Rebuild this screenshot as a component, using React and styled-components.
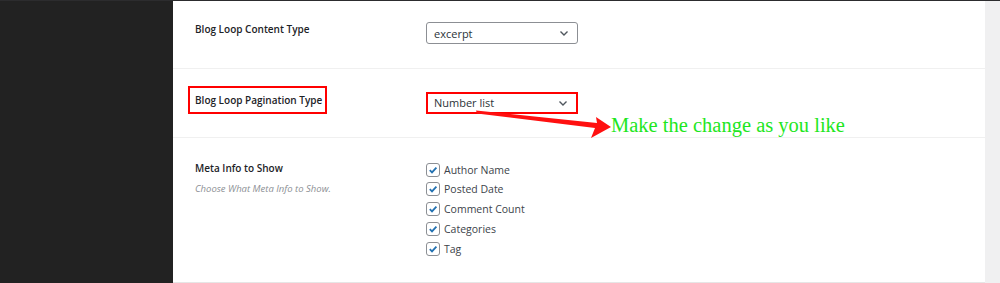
import React from "react";
import styled, { createGlobalStyle } from "styled-components";

const Global = createGlobalStyle`
  html, body { margin: 0; padding: 0; background: #f0f0f1; }
  body { font-family: "Open Sans", "Noto Sans", sans-serif; }
`;

const Page = styled.div`
  width: 1000px;
  height: 283px;
  display: flex;
  border-top: 1px solid #2c2c2e;
  box-sizing: border-box;
  overflow: hidden;
  position: relative;
`;

const Sidebar = styled.div`
  width: 173px;
  flex-shrink: 0;
  background: #222222;
`;

const Panel = styled.div`
  width: 812px;
  background: #fff;
  display: flex;
  flex-direction: column;
  border-bottom: 1px solid #e6e6e6;
  box-sizing: border-box;
`;

const Row = styled.div`
  display: flex;
  height: ${p => p.h}px;
  border-bottom: ${p => (p.last ? "none" : "1px solid #f0f0f0")};
  box-sizing: border-box;
`;

const LabelCol = styled.div`
  width: 253px;
  padding-left: 22px;
  padding-top: ${p => p.pt}px;
  box-sizing: border-box;
`;

const Label = styled.div`
  display: inline-block;
  font-size: 10px;
  font-weight: 600;
  color: #1d2327;
  ${p =>
    p.boxed &&
    `
    margin-left: -7px;
    padding: 5px 3px 5px 5px;
    border: 2px solid #f00;
  `}
`;

const Desc = styled.div`
  font-size: 9.5px;
  font-style: italic;
  color: #8c8f94;
  margin-top: 5px;
`;

const FieldCol = styled.div`
  padding-top: ${p => p.pt}px;
`;

const Select = styled.div`
  width: 152px;
  height: 22px;
  box-sizing: border-box;
  border: ${p => (p.red ? "2px solid #f00" : "1px solid #8c8f94")};
  border-radius: ${p => (p.red ? "0" : "3px")};
  display: flex;
  align-items: center;
  justify-content: space-between;
  padding: 0 8px 0 ${p => (p.red ? "6px" : "7px")};
  font-size: 11px;
  color: #2c3338;
`;

const Checks = styled.div`
  display: flex;
  flex-direction: column;
  gap: 5.8px;
`;

const CheckRow = styled.div`
  display: flex;
  align-items: center;
  gap: 4px;
  font-size: 10.5px;
  color: #3c434a;
  height: 14px;
`;

const Box = styled.span`
  width: 12px;
  height: 12px;
  border: 1px solid #8c8f94;
  border-radius: 3px;
  display: flex;
  align-items: center;
  justify-content: center;
  background: #fff;
`;

const Gutter = styled.div`
  flex: 1;
  background: #f0f0f1;
`;

const Note = styled.div`
  position: absolute;
  left: 611px;
  top: 113px;
  font-family: "Liberation Serif", "Times New Roman", serif;
  font-size: 20.5px;
  color: #1ee61e;
  white-space: nowrap;
`;

const ArrowSvg = styled.svg`
  position: absolute;
  left: 0;
  top: 0;
  pointer-events: none;
`;

const Chevron = () => (
  <svg width="10" height="10" viewBox="0 0 10 10">
    <path d="M1.5 3.5 L5 7 L8.5 3.5" fill="none" stroke="#50575e" strokeWidth="1.4" />
  </svg>
);

const Tick = () => (
  <svg width="10" height="10" viewBox="0 0 10 10">
    <path d="M1.8 5.2 L4 7.4 L8.4 2.6" fill="none" stroke="#2271b1" strokeWidth="1.8" />
  </svg>
);

const metas = ["Author Name", "Posted Date", "Comment Count", "Categories", "Tag"];

export default function App() {
  return (
    <>
      <Global />
      <Page>
        <Sidebar />
        <Panel>
          <Row h={68}>
            <LabelCol pt={15}>
              <Label>Blog Loop Content Type</Label>
            </LabelCol>
            <FieldCol pt={21}>
              <Select>
                excerpt
                <Chevron />
              </Select>
            </FieldCol>
          </Row>
          <Row h={69}>
            <LabelCol pt={17}>
              <Label boxed>Blog Loop Pagination Type</Label>
            </LabelCol>
            <FieldCol pt={23}>
              <Select red>
                Number list
                <Chevron />
              </Select>
            </FieldCol>
          </Row>
          <Row h={145} last>
            <LabelCol pt={17}>
              <Label>Meta Info to Show</Label>
              <Desc>Choose What Meta Info to Show.</Desc>
            </LabelCol>
            <FieldCol pt={25}>
              <Checks>
                {metas.map(m => (
                  <CheckRow key={m}>
                    <Box>
                      <Tick />
                    </Box>
                    {m}
                  </CheckRow>
                ))}
              </Checks>
            </FieldCol>
          </Row>
        </Panel>
        <Gutter />
        <ArrowSvg width="1000" height="283">
          <polygon points="476,109.5 477,112.5 595,127 591,137 611,126 596,116 597,122" fill="#ff1010" />
        </ArrowSvg>
        <Note>Make the change as you like</Note>
      </Page>
    </>
  );
}
